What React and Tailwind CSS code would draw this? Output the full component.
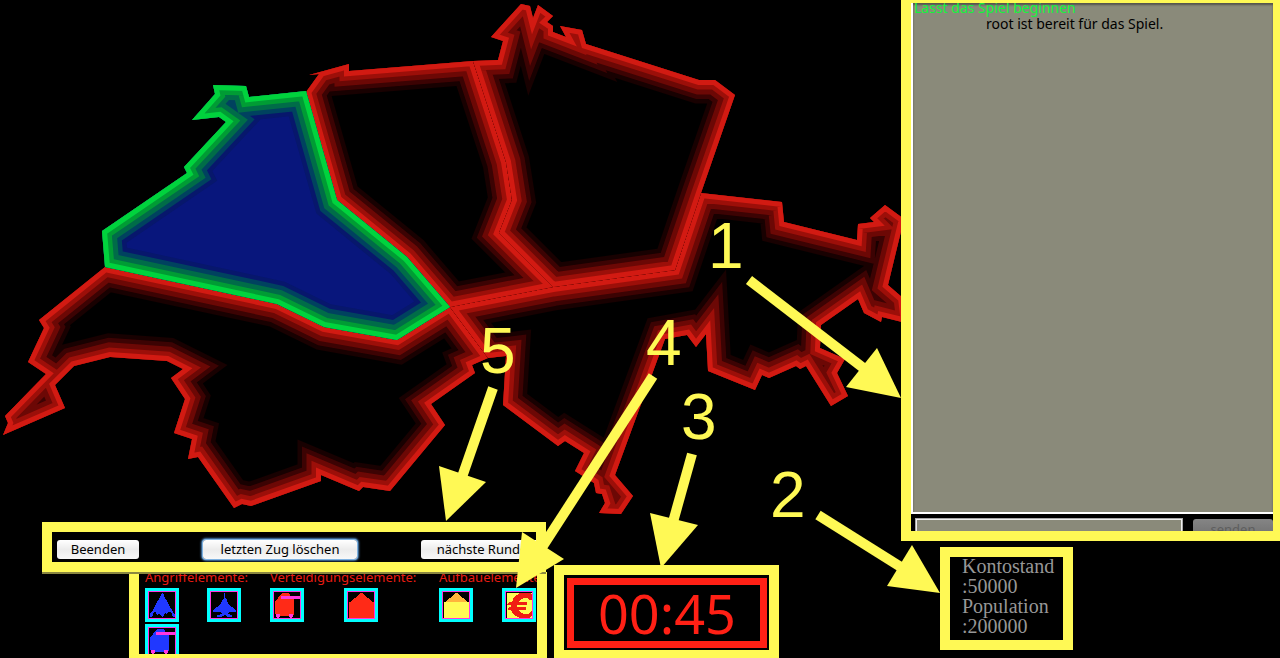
import React from "react";

const RED = ["#180101", "#3c0303", "#6c0805", "#9c0f09", "#d21a12"];
const GREEN = ["#07176c", "#00425f", "#006c48", "#009c34", "#00d33d"];
const BANDS = [47, 38, 29, 19, 10];

const REGIONS = [
  {
    id: "southwest",
    fill: "#000000",
    colors: RED,
    points:
      "105,267 277,304 324,327 397,340 450,307 488,358 472,365 475,373 431,404 445,425 390,491 363,487 359,491 321,475 321,481 251,506 242,504 234,508 198,457 188,459 192,439 174,433 185,399 171,378 183,369 167,361 110,357 74,366 55,385 65,408 3,435 8,423 5,416 46,374 28,362 44,328 39,320",
  },
  {
    id: "southeast",
    fill: "#000000",
    colors: RED,
    points:
      "701,193 782,202 784,222 857,240 858,224 874,222 870,218 885,205 904,219 888,285 903,298 906,323 882,317 881,322 864,313 858,299 821,325 820,348 845,359 837,373 848,396 831,406 806,366 800,369 796,366 769,378 762,375 755,390 708,371 706,334 696,347 687,335 665,339 615,475 633,496 621,514 599,513 605,503 602,494 596,493 594,483 575,471 584,453 565,441 558,446 503,405 506,356 488,358 450,307 553,287 675,270",
  },
  {
    id: "northwest",
    fill: "#000000",
    colors: RED,
    points:
      "306,92 319,74 309,75 349,64 349,71 473,61 506,162 512,200 499,233 553,287 450,307 407,257 337,200",
  },
  {
    id: "northeast",
    fill: "#000000",
    colors: RED,
    points:
      "473,61 498,60 503,41 491,37 521,4 530,6 533,18 538,5 553,16 547,22 553,26 553,32 566,37 560,26 582,30 586,44 699,80 715,80 735,95 701,193 675,270 553,287 499,233 512,200 506,162",
  },
  {
    id: "west",
    fill: "#08167c",
    colors: GREEN,
    points:
      "213,85 246,86 249,97 306,91 337,200 407,257 450,307 397,340 324,327 277,304 105,267 102,231 187,173 184,167 226,122 219,117 192,120 215,94",
  },
];

function GameMap() {
  return (
    <svg className="block h-[522px] w-[901px]" viewBox="0 0 901 522" role="img" aria-label="Spielkarte">
      <defs>
        {REGIONS.map((r) => (
          <clipPath key={r.id} id={r.id}>
            <polygon points={r.points} />
          </clipPath>
        ))}
      </defs>
      {REGIONS.map((r) => (
        <g key={r.id} clipPath={`url(#${r.id})`}>
          <polygon points={r.points} fill={r.fill} />
          {BANDS.map((w, i) => (
            <polygon
              key={w}
              points={r.points}
              fill="none"
              stroke={r.colors[i]}
              strokeWidth={w}
              strokeLinejoin="miter"
              strokeMiterlimit="10"
            />
          ))}
        </g>
      ))}
    </svg>
  );
}

const CALLOUTS = [
  { n: "1", x: 708, y: 268, line: [749, 280, 866, 370], head: "901,398 877,348 846,387" },
  { n: "2", x: 770, y: 517, line: [818, 515, 904, 569], head: "940,593 912,545 887,586" },
  { n: "3", x: 681, y: 439, line: [692, 454, 673, 522], head: "661,568 650,513 698,525" },
  { n: "4", x: 646, y: 365, line: [653, 376, 541, 549], head: "516,588 522,532 564,559" },
  { n: "5", x: 480, y: 373, line: [493, 388, 462, 477], head: "446,521 439,466 486,482" },
];

function Callouts() {
  return (
    <svg
      className="pointer-events-none absolute left-0 top-0 z-20 h-[658px] w-[1280px]"
      viewBox="0 0 1280 658"
      fill="#fff955"
    >
      {CALLOUTS.map((c) => (
        <g key={c.n}>
          <text x={c.x} y={c.y} className="font-['Liberation_Sans',sans-serif] text-[64px]">
            {c.n}
          </text>
          <line x1={c.line[0]} y1={c.line[1]} x2={c.line[2]} y2={c.line[3]} stroke="#fff955" strokeWidth="10" />
          <polygon points={c.head} />
        </g>
      ))}
    </svg>
  );
}

function Bomber() {
  return <polygon fill="#2038ff" points="13,1 14,1 16,6 18,9 20,13 23,18 26,23 26,25 24,25 22,20 19,20 18,23 16,21 15,23 13,25 11,23 10,21 8,23 7,20 5,20 3,25 1,25 1,22 4,18 7,12 10,7" />;
}
function Fighter() {
  return <polygon fill="#2038ff" points="13,1 14,1 14,6 16,8 17,12 25,18 25,20 18,20 17,22 21,23 21,25 17,25 14,23 10,25 6,25 6,23 11,22 10,20 2,20 2,18 10,12 11,8 13,6" />;
}
function Tank({ color }) {
  return (
    <>
      <polygon fill={color} points="7,2 9,1 14,1 16,3 16,6 20,7 20,22 19,24 3,24 1,22 1,9 4,7 4,5" />
      <path fill="#ff37e0" d="M7 4H26V7H7zM2 22H6V25H5V26H3V25H2zM15 22H19V25H18V26H16V25H15z" />
    </>
  );
}
function House({ wall, roof }) {
  return (
    <>
      <polygon fill={roof} points="1,11 13,1 14,1 26,11" />
      <rect x="1" y="10" width="25" height="16" fill={wall} />
    </>
  );
}
function Euro() {
  return (
    <>
      <rect x="1" y="1" width="25" height="25" fill="#fffb55" />
      <path
        fill="#f01d13"
        d="M14 1H24L26 3V8H23L21 6H18L14 8L12 10H21V13H11V15H20V18H12L14 20L18 22H22L26 19V24L23 26H14L8 23L6 20L5 18H2L3 15H5V13H1L3 10H6L8 5z"
      />
    </>
  );
}

function Piece({ label, children }) {
  return (
    <button type="button" aria-label={label} className="size-[34px] shrink-0 border-[3px] border-[#00ffff] bg-black">
      <svg viewBox="-1 -1 28 28" className="block size-[28px]" shapeRendering="crispEdges">
        {children}
        <path fill="#ff37e0" d="M-1 -1H27V27H-1zM0 0V26H26V0z" fillRule="evenodd" />
      </svg>
    </button>
  );
}

function Group({ title, className, children }) {
  return (
    <section className={className}>
      <h2 className="h-[19px] whitespace-nowrap text-[13px] leading-4 text-[#e81c12]">{title}</h2>
      {children}
    </section>
  );
}

function ActionButton({ className, children }) {
  return (
    <button
      type="button"
      className={`h-[19px] shrink-0 whitespace-nowrap rounded-[3px] bg-linear-to-b from-white via-[#ececec] to-[#f8f8f8] text-center text-[13px] leading-[19px] text-black ${className}`}
    >
      {children}
    </button>
  );
}

function Toolbar() {
  return (
    <div className="relative z-10 flex h-[50px] w-[504px] gap-16 overflow-hidden border-10 border-[#fff955] bg-black pl-[5px] pt-2 shadow-[0_2px_0_#8a8740]">
      <ActionButton className="w-[82px]">Beenden</ActionButton>
      <ActionButton className="w-[154px] shadow-[0_0_0_1px_#7fb2e0,0_0_2px_2px_#4a82b8]">letzten Zug löschen</ActionButton>
      <ActionButton className="w-[122px]">nächste Runde</ActionButton>
    </div>
  );
}

function Pieces() {
  return (
    <div className="ml-[87px] h-[86px] w-[418px] overflow-hidden border-x-10 border-b-4 border-[#fff955] bg-black">
      <div className="-mt-[3px] flex pl-[6px]">
        <Group title="Angriffelemente:" className="w-[125px] shrink-0">
          <div className="flex w-[110px] flex-wrap gap-x-7 gap-y-[2px]">
            <Piece label="Bomber"><Bomber /></Piece>
            <Piece label="Jäger"><Fighter /></Piece>
            <Piece label="Panzer"><Tank color="#2038ff" /></Piece>
          </div>
        </Group>
        <Group title="Verteidigungselemente:" className="w-[169px] shrink-0">
          <div className="flex gap-10">
            <Piece label="Abwehrpanzer"><Tank color="#ff2a17" /></Piece>
            <Piece label="Bunker"><House wall="#ff2a17" roof="#ff2a17" /></Piece>
          </div>
        </Group>
        <Group title="Aufbauelemente:" className="w-[97px] shrink-0">
          <div className="flex gap-[29px]">
            <Piece label="Haus"><House wall="#fffb55" roof="#ffb43c" /></Piece>
            <Piece label="Bank"><Euro /></Piece>
          </div>
        </Group>
      </div>
    </div>
  );
}

function Clock() {
  return (
    <div className="mt-[43px] h-[93px] w-[225px] border-10 border-b-8 border-[#fff955] bg-black p-[3px] pr-0.5 pb-0.5">
      <div className="flex h-full items-center justify-center border-7 border-[#ff2015] text-[54px] leading-none text-[#ff2015]">
        <time>00:45</time>
      </div>
    </div>
  );
}

function Chat() {
  return (
    <section className="flex h-[541px] flex-col overflow-hidden border-[10px] border-r-[7px] border-t-[3px] border-[#fff955] bg-black">
      <div className="h-[511px] shrink-0 border-b-2 border-l-2 border-white bg-[#8a8a7a] text-[14px] leading-4 shadow-[inset_0_2px_2px_#55554c]">
        <p className="-mt-[3px] pl-px text-[#12f53c]">Lasst das Spiel beginnen</p>
        <p className="pl-[73px] text-black">root ist bereit für das Spiel.</p>
      </div>
      <form className="mt-1 flex gap-[10px] pl-1" onSubmit={(e) => e.preventDefault()}>
        <input
          aria-label="Nachricht"
          className="h-6 min-w-0 flex-1 border-2 border-[#eeeeee] bg-[#8a8a7a] outline outline-1 -outline-offset-1 outline-[#a8a8a8]"
        />
        <button
          type="button"
          className="mt-px h-5 w-20 rounded-t-[3px] bg-linear-to-b from-[#858585] to-[#6e6e6e] text-[13px] leading-5 text-[#5e5e5e]"
        >
          senden
        </button>
      </form>
    </section>
  );
}

function Status() {
  return (
    <div className="ml-[39px] mt-[6px] h-[103px] w-[133px] border-10 border-[#fff955] bg-black">
      <dl className="-mt-px pl-3 font-['Liberation_Serif',serif] text-[20px] leading-5 text-[#979797]">
        <dt>Kontostand</dt>
        <dd>:50000</dd>
        <dt>Population</dt>
        <dd>:200000</dd>
      </dl>
    </div>
  );
}

export default function App() {
  return (
    <div className="relative flex min-h-screen overflow-hidden bg-black font-['Noto_Sans',sans-serif]">
      <main className="shrink-0">
        <GameMap />
        <div className="flex gap-2 pl-[42px]">
          <div className="w-[504px]">
            <Toolbar />
            <Pieces />
          </div>
          <Clock />
        </div>
      </main>
      <aside className="min-w-0 flex-1">
        <Chat />
        <Status />
      </aside>
      <Callouts />
    </div>
  );
}
